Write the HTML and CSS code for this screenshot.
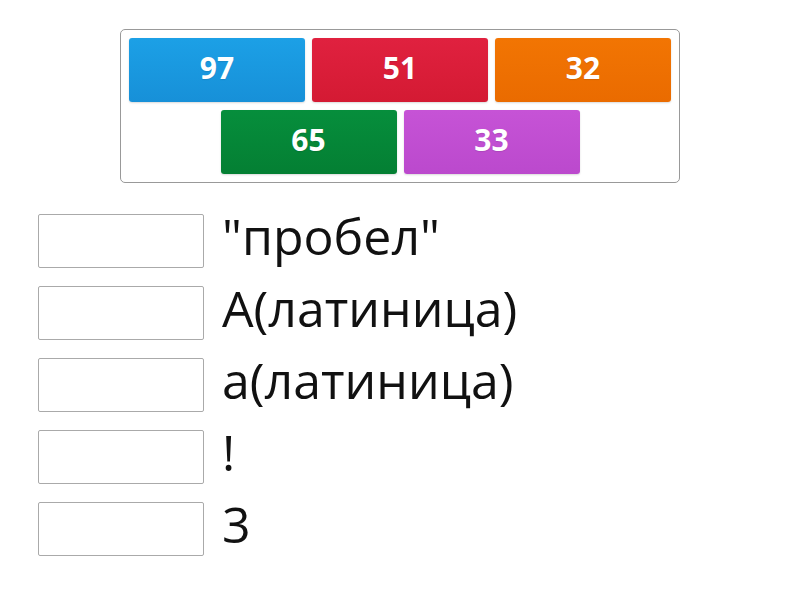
FILE: index.html
```html
<!DOCTYPE html>
<html lang="ru">
<head>
    <meta charset="UTF-8">
    <title>Сопоставление</title>
    <link rel="stylesheet" href="styles.css">
</head>
<body>
    <div class="page">
        <div class="tile-box">
            <div class="tile-row">
                <div class="tile tile-blue">97</div>
                <div class="tile tile-red">51</div>
                <div class="tile tile-orange">32</div>
            </div>
            <div class="tile-row">
                <div class="tile tile-green">65</div>
                <div class="tile tile-purple">33</div>
            </div>
        </div>

        <div class="answers">
            <div class="answer-row">
                <div class="slot"></div>
                <div class="answer-text">"пробел"</div>
            </div>
            <div class="answer-row">
                <div class="slot"></div>
                <div class="answer-text">A(латиница)</div>
            </div>
            <div class="answer-row">
                <div class="slot"></div>
                <div class="answer-text">a(латиница)</div>
            </div>
            <div class="answer-row">
                <div class="slot"></div>
                <div class="answer-text">!</div>
            </div>
            <div class="answer-row">
                <div class="slot"></div>
                <div class="answer-text">3</div>
            </div>
        </div>
    </div>
</body>
</html>
```

FILE: styles.css
```css
body {
    margin: 0;
    background: #fff;
    font-family: "Open Sans", "Noto Sans", sans-serif;
}

.page {
    padding-top: 29px;
}

/* the box with the draggable numbers */
.tile-box {
    width: 542px;
    margin-left: 120px;
    padding: 8px 8px;
    border: 1px solid #999;
    border-radius: 5px;
    display: flex;
    flex-direction: column;
    gap: 8px;
}

.tile-row {
    display: flex;
    justify-content: center;
    gap: 7px;
}

.tile {
    width: 176px;
    height: 64px;
    padding-bottom: 5px;
    box-sizing: border-box;
    border-radius: 3px;
    color: #fff;
    font-weight: 700;
    font-size: 30px;
    display: flex;
    align-items: center;
    justify-content: center;
    box-shadow: 0 1px 2px rgba(0,0,0,0.15);
    text-shadow: 0 1px 1px rgba(0,0,0,0.1);
}

.tile-blue   { background: linear-gradient(#1ca0e6, #1790d8); }
.tile-red    { background: linear-gradient(#e0213f, #d41a33); }
.tile-orange { background: linear-gradient(#f27503, #ea6b00); }
.tile-green  { background: linear-gradient(#068e3c, #047f33); }
.tile-purple { background: linear-gradient(#c653d6, #bb49cd); }

.answers {
    margin-top: 31px;
    padding-left: 38px;
    display: flex;
    flex-direction: column;
    gap: 18px;
}

.answer-row {
    display: flex;
    align-items: flex-start;
    gap: 18px;
}

.slot {
    width: 164px;
    height: 52px;
    border: 1px solid #aaa;
    border-radius: 2px;
}

.answer-text {
    font-size: 50px;
    color: #111;
    line-height: 44px;
}
```
